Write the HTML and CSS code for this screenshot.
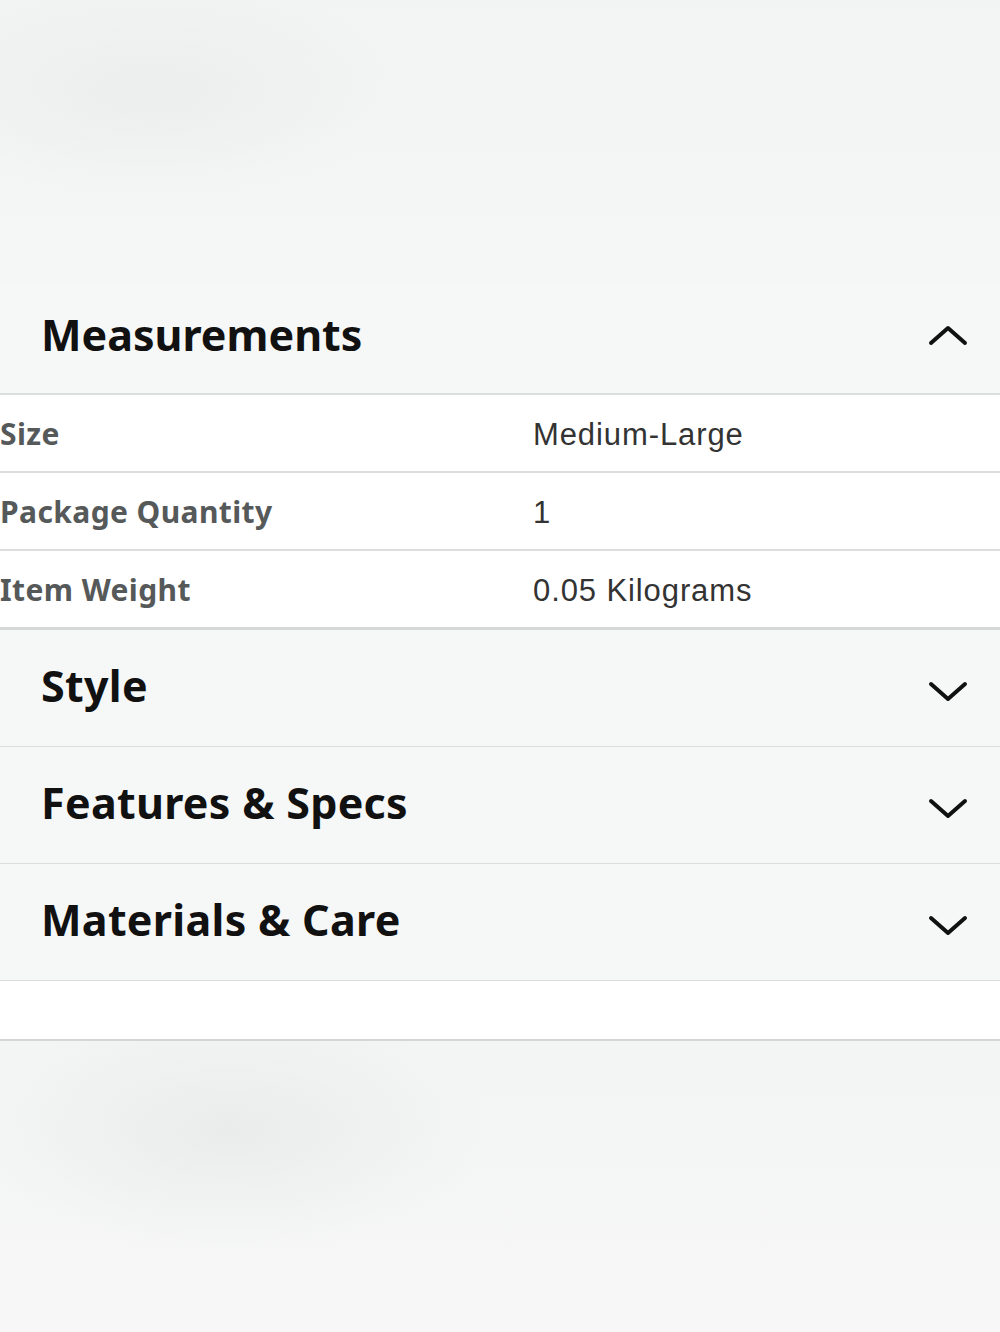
FILE: index.html
```html
<!DOCTYPE html>
<html lang="en">
<head>
    <meta charset="UTF-8">
    <meta name="viewport" content="width=device-width, initial-scale=1.0">
    <title>Product details</title>
    <link rel="stylesheet" href="styles.css">
</head>
<body>
    <div class="backdrop-top"></div>

    <div class="details">
        <div class="section open">
            <div class="section-head short">
                <h2>Measurements</h2>
                <svg class="chevron up" viewBox="0 0 40 22"><path d="M3 19 L20 4 L37 19"/></svg>
            </div>
            <div class="spec-row">
                <div class="spec-label">Size</div>
                <div class="spec-value">Medium-Large</div>
            </div>
            <div class="spec-row">
                <div class="spec-label">Package Quantity</div>
                <div class="spec-value">1</div>
            </div>
            <div class="spec-row last">
                <div class="spec-label">Item Weight</div>
                <div class="spec-value">0.05 Kilograms</div>
            </div>
        </div>

        <div class="section">
            <div class="section-head">
                <h2>Style</h2>
                <svg class="chevron down" viewBox="0 0 40 22"><path d="M3 3 L20 18 L37 3"/></svg>
            </div>
        </div>

        <div class="section">
            <div class="section-head">
                <h2>Features &amp; Specs</h2>
                <svg class="chevron down" viewBox="0 0 40 22"><path d="M3 3 L20 18 L37 3"/></svg>
            </div>
        </div>

        <div class="section">
            <div class="section-head">
                <h2>Materials &amp; Care</h2>
                <svg class="chevron down" viewBox="0 0 40 22"><path d="M3 3 L20 18 L37 3"/></svg>
            </div>
        </div>

        <div class="spacer"></div>
    </div>

    <div class="backdrop-bottom"></div>
</body>
</html>
```

FILE: styles.css
```css
body {
    margin: 0;
    width: 1000px;
    height: 1332px;
    overflow: hidden;
    background-color: #f4f5f5;
    font-family: "Noto Sans", "DejaVu Sans", sans-serif;
}

.backdrop-top {
    height: 285px;
    background:
        radial-gradient(ellipse 260px 110px at 150px 90px, #eceeed 0%, rgba(236, 238, 237, 0) 100%),
        linear-gradient(180deg, #f2f3f3 0%, #f5f6f6 100%);
}

.backdrop-bottom {
    height: 292px;
    background:
        radial-gradient(ellipse 260px 120px at 230px 90px, #eaeceb 0%, rgba(234, 236, 235, 0) 100%),
        linear-gradient(180deg, #f3f4f4 0%, #f7f7f7 100%);
}

.details {
    background-color: #fff;
}

.section-head {
    display: flex;
    align-items: center;
    justify-content: space-between;
    box-sizing: border-box;
    height: 117px;
    padding: 0 32px 6px 41px;
    background-color: #f6f7f7;
    border-bottom: 1px solid #dcdddd;
}

.section-head.short {
    height: 110px;
    padding-bottom: 10px;
    border-bottom: 2px solid #dcdddd;
}

.section-head h2 {
    margin: 0;
    font-size: 43px;
    font-weight: 700;
    color: #111;
    letter-spacing: 0.3px;
}

.section-head.short h2 {
    letter-spacing: 0;
}

.chevron {
    width: 40px;
    height: 22px;
    fill: none;
    stroke: #111;
    stroke-width: 4;
    stroke-linecap: round;
    stroke-linejoin: round;
}

.chevron.up {
    margin-top: 2px;
}

.chevron.down {
    margin-top: 14px;
}

.spec-row {
    display: grid;
    grid-template-columns: 533px 1fr;
    align-items: center;
    height: 76px;
    border-bottom: 2px solid #dcdddd;
}

.spec-row.last {
    height: 76px;
    border-bottom: 3px solid #d6d7d7;
}

.spec-label {
    font-size: 30px;
    font-weight: 700;
    color: #565959;
    letter-spacing: 0.4px;
}

.spec-value {
    padding-top: 3px;
    font-family: "Liberation Sans", Arial, sans-serif;
    font-size: 31px;
    color: #333;
    letter-spacing: 0.9px;
}

.spacer {
    height: 58px;
    border-bottom: 2px solid #d4d5d5;
}
```
